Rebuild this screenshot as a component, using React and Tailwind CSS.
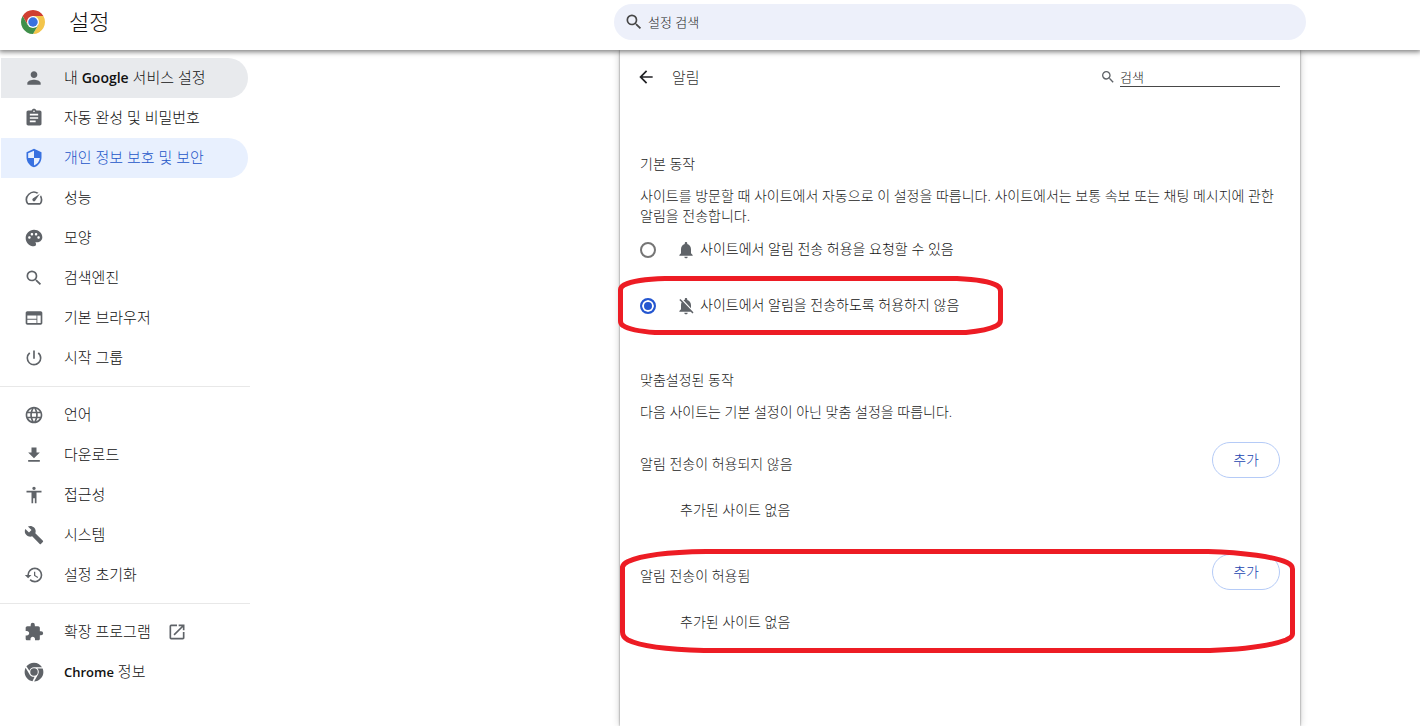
import React from "react";
import {
  MdPerson,
  MdAssignment,
  MdOutlineSpeed,
  MdPalette,
  MdSearch,
  MdWeb,
  MdPowerSettingsNew,
  MdLanguage,
  MdFileDownload,
  MdAccessibility,
  MdBuild,
  MdRestore,
  MdExtension,
  MdOpenInNew,
  MdNotifications,
  MdNotificationsOff,
  MdArrowBack,
  MdSecurity,
} from "react-icons/md";

function ChromeLogo() {
  return (
    <svg viewBox="0 0 48 48" className="size-6 shrink-0" aria-hidden="true">
      <path d="M24 12h20.78A24 24 0 0 0 3.22 12l10.39 18L24 12z" fill="#cf3f31" />
      <path d="M34.39 30L24 48a24 24 0 0 0 20.78-36H24l10.39 18z" fill="#f3c54b" />
      <path d="M13.61 30L3.22 12A24 24 0 0 0 24 48l10.39-18H13.61z" fill="#3f8f4a" />
      <circle cx="24" cy="24" r="12" fill="#fff" />
      <circle cx="24" cy="24" r="9.5" fill="#3871e0" />
    </svg>
  );
}

function ChromeMono() {
  return (
    <svg viewBox="0 0 48 48" className="size-5 shrink-0" fill="currentColor" aria-hidden="true">
      <circle cx="24" cy="24" r="9" />
      <path d="M24 1.500c8.200 0 15.300 4.300 19.300 11H24c-5.200 0-9.600 3.400-11 8.200L5.800 10.300C10 4.900 16.600 1.500 24 1.500z" />
      <path d="M3.800 13.700l9.600 16.300c2.500 4.300 7.500 6.300 12 5.200l-5 11C9.600 44.500 1.500 35.200 1.500 24c0-3.700.8-7.200 2.300-10.300z" />
      <path d="M44.800 15.500H32.200c3.600 3.600 4.400 9.400 1.800 14l-9.700 17C36.500 46.500 46.500 36.400 46.500 24c0-3-.6-5.900-1.700-8.500z" />
    </svg>
  );
}

const groups = [
  [
    { label: <>내 <span className="text-sm font-semibold">Google</span> 서비스 설정</>, Icon: MdPerson, state: "hover" },
    { label: "자동 완성 및 비밀번호", Icon: MdAssignment },
    { label: "개인 정보 보호 및 보안", Icon: MdSecurity, state: "active" },
    { label: "성능", Icon: MdOutlineSpeed },
    { label: "모양", Icon: MdPalette },
    { label: "검색엔진", Icon: MdSearch },
    { label: "기본 브라우저", Icon: MdWeb },
    { label: "시작 그룹", Icon: MdPowerSettingsNew },
  ],
  [
    { label: "언어", Icon: MdLanguage },
    { label: "다운로드", Icon: MdFileDownload },
    { label: "접근성", Icon: MdAccessibility },
    { label: "시스템", Icon: MdBuild },
    { label: "설정 초기화", Icon: MdRestore },
  ],
  [
    { label: "확장 프로그램", Icon: MdExtension, external: true },
    { label: <><span className="text-[13px] font-semibold">Chrome</span> 정보</>, Icon: ChromeMono },
  ],
];

const itemStyles = {
  hover: "bg-[#e8eaed] text-[#111111]",
  active: "bg-[#e8f0fe] text-[#2456c8]",
  normal: "text-[#111111]",
};

const iconStyles = {
  hover: "text-[#5f6368]",
  active: "text-[#3871e0]",
  normal: "text-[#5f6368]",
};

function NavItem({ item }) {
  const { label, Icon, external } = item;
  const state = item.state || "normal";
  return (
    <a
      href="#"
      aria-current={state === "active" ? "page" : undefined}
      className={`ml-px mr-0.5 flex h-10 items-center rounded-r-full pl-[23px] text-[15px] leading-5 ${itemStyles[state]}`}
    >
      <span className={`mr-5 flex ${iconStyles[state]}`}>
        <Icon className="size-5" />
      </span>
      <span className="pb-0.5">{label}</span>
      {external && <MdOpenInNew className="ml-4 size-5 text-[#5f6368]" />}
    </a>
  );
}

function Choice({ id, Icon, label, checked, children }) {
  return (
    <div className="relative flex h-12 items-center">
      <input
        type="radio"
        name="notifications"
        id={id}
        defaultChecked={checked}
        className="size-4 shrink-0 appearance-none rounded-full border-2 border-[#757575] bg-white checked:border-[#2456d0] checked:bg-[#2456d0] checked:shadow-[inset_0_0_0_2px_#fff]"
      />
      <label htmlFor={id} className="flex items-center text-sm leading-5 text-[#111111]">
        <Icon className="ml-5 mr-1 size-5 text-[#5f6368]" />
        <span className="pb-0.5">{label}</span>
      </label>
      {children}
    </div>
  );
}

function SiteList({ title, children }) {
  return (
    <section className="relative">
      <div className="flex items-end justify-between">
        <h3 className="leading-7">{title}</h3>
        <button
          type="button"
          className="h-9 rounded-full border border-[#b5cbf7] px-5 text-sm font-light text-[#1a46b0]"
        >
          추가
        </button>
      </div>
      <p className="flex min-h-16 items-center pl-10">추가된 사이트 없음</p>
      {children}
    </section>
  );
}

export default function App() {
  return (
    <div className="flex min-h-screen flex-col overflow-x-hidden bg-white font-['Open_Sans','Noto_Sans_CJK_KR',sans-serif] font-light">
      <header className="relative z-10 flex h-[50px] items-start bg-white shadow-[0_1px_5px_1px_rgba(0,0,0,0.5)]">
        <div className="flex h-11 items-center gap-6 pl-[21px]">
          <ChromeLogo />
          <h1 className="pb-0.5 text-[22px] font-light leading-8 text-[#111111]">설정</h1>
        </div>
        <label className="ml-auto mr-[114px] mt-1 flex h-9 w-full max-w-[692px] items-center rounded-full bg-[#edf0fa] pl-2.5 text-[#474747]">
          <MdSearch className="size-5 shrink-0" />
          <input
            type="search"
            aria-label="설정 검색"
            placeholder="설정 검색"
            className="ml-1 min-w-0 flex-1 bg-transparent text-[13px] leading-5 outline-none placeholder:text-[#222222]"
          />
        </label>
      </header>

      <div className="flex flex-1">
        <nav className="w-[250px] shrink-0 pt-2">
          {groups.map((items, g) => (
            <div key={g}>
              {g > 0 && <hr className="my-2 border-t border-[#e8e8e8]" />}
              {items.map((item, i) => (
                <NavItem key={i} item={item} />
              ))}
            </div>
          ))}
        </nav>

        <main className="ml-auto mr-[120px] w-full max-w-[680px] bg-white px-5 text-sm leading-5 text-[#222222] shadow-[0_0_2px_rgba(0,0,0,0.5),0_0_8px_rgba(0,0,0,0.2)]">
          <div className="flex h-[54px] items-center">
            <button type="button" aria-label="뒤로" className="-ml-1 flex text-[#202124]">
              <MdArrowBack className="size-5" />
            </button>
            <h2 className="ml-4 text-[15px] font-light text-[#333333]">알림</h2>
            <label className="ml-auto flex items-center text-[#5f6368]">
              <MdSearch className="mr-1 size-4" />
              <input
                type="search"
                aria-label="검색"
                placeholder="검색"
                className="h-5 w-40 border-b border-[#474747] text-[13px] leading-5 outline-none placeholder:text-[#222222]"
              />
            </label>
          </div>

          <h3 className="mt-[50px]">기본 동작</h3>
          <p className="mt-3">
            사이트를 방문할 때 사이트에서 자동으로 이 설정을 따릅니다. 사이트에서는 보통 속보 또는 채팅 메시지에 관한
            알림을 전송합니다.
          </p>
          <div className="flex flex-col gap-2">
            <Choice id="ask" Icon={MdNotifications} label="사이트에서 알림 전송 허용을 요청할 수 있음" />
            <Choice id="block" Icon={MdNotificationsOff} label="사이트에서 알림을 전송하도록 허용하지 않음" checked>
              <svg
                className="pointer-events-none absolute -left-6 -top-2 h-[62px] w-[390px]"
                viewBox="0 0 390 62"
                fill="none"
                stroke="#ed1c24"
                strokeWidth="5"
                aria-hidden="true"
              >
                <path d="M49 4.500H341C362 5.500 375 8 381 11.500Q384.500 13.500 384.500 17V46Q384.500 50 380 52C372 56 360 57.500 350 58.500H39C24 57.500 13 55.500 7 51.500Q4.500 50 4.500 47V16Q4.500 13 8 11C16 7 30 5 49 4.500Z" />
              </svg>
            </Choice>
          </div>

          <h3 className="mt-10">맞춤설정된 동작</h3>
          <p className="mb-5 mt-3">다음 사이트는 기본 설정이 아닌 맞춤 설정을 따릅니다.</p>
          <div className="flex flex-col gap-3">
            <SiteList title="알림 전송이 허용되지 않음" />
            <SiteList title="알림 전송이 허용됨">
              <svg
                className="pointer-events-none absolute -left-5 -top-2 h-[110px] w-[680px]"
                viewBox="0 0 680 110"
                fill="none"
                stroke="#ed1c24"
                strokeWidth="5"
                aria-hidden="true"
              >
                <path d="M86 5.500H588C624 6.500 655 11 667 16.500Q672.500 19 672.500 23V88Q672.500 91 666 94C650 100 620 103.500 590 104.500H84C48 103.500 20 100 8 94Q2.500 91 2.500 86V21Q3 18 8 15.500C22 9 50 6 86 5.500Z" />
              </svg>
            </SiteList>
          </div>
        </main>
      </div>
    </div>
  );
}
